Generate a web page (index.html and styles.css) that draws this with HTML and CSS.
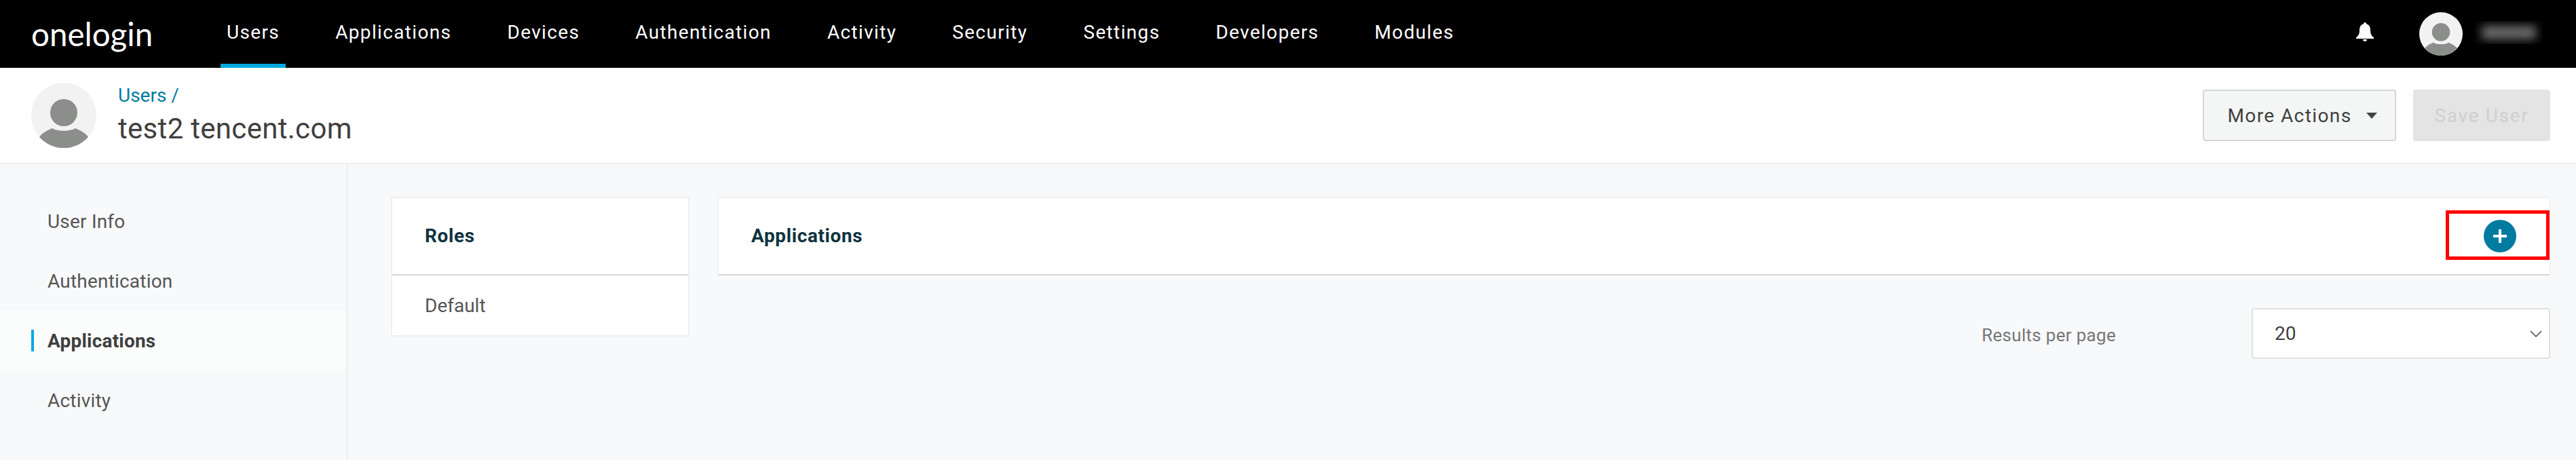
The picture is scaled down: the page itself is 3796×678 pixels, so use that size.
FILE: index.html
```html
<!DOCTYPE html>
<html lang="en">
<head>
<meta charset="utf-8">
<title>OneLogin - test2 tencent.com</title>
<link rel="stylesheet" href="styles.css">
</head>
<body>
<header class="topbar">
  <div class="logo">onelogin</div>
  <nav class="nav">
    <a class="nav-item active">Users</a>
    <a class="nav-item">Applications</a>
    <a class="nav-item">Devices</a>
    <a class="nav-item">Authentication</a>
    <a class="nav-item">Activity</a>
    <a class="nav-item">Security</a>
    <a class="nav-item">Settings</a>
    <a class="nav-item">Developers</a>
    <a class="nav-item">Modules</a>
  </nav>
  <div class="top-right">
    <svg class="bell" viewBox="0 0 26 28"><path d="M13 0c1.300 0 2 .9 2 2.200C19.500 3.300 21 7 21 11.500c0 5 1.500 8 5 11V24H0v-1.500c3.500-3 5-6 5-11C5 7 6.500 3.300 11 2.200 11 .9 11.700 0 13 0z" fill="#fff"/><path d="M10 25h6a3 3 0 0 1-6 0z" fill="#fff"/></svg>
    <svg class="avatar-small" viewBox="0 0 96 96"><circle cx="48" cy="48" r="48" fill="#f2f2f2"/><circle cx="48" cy="44" r="20" fill="#8c8e8c"/><path d="M12 80C16 74 24 70 31 67 38 72 58 72 65 67 72 70 80 74 84 80A48 48 0 0 1 12 80Z" fill="#8c8e8c"/></svg>
    <div class="blurred-name"><span class="blur-blob"></span></div>
  </div>
</header>

<section class="user-head">
  <svg class="avatar" viewBox="0 0 96 96"><circle cx="48" cy="48" r="48" fill="#f2f2f2"/><circle cx="48" cy="44" r="20" fill="#8c8e8c"/><path d="M12 80C16 74 24 70 31 67 38 72 58 72 65 67 72 70 80 74 84 80A48 48 0 0 1 12 80Z" fill="#8c8e8c"/></svg>
  <div class="user-title">
    <a class="crumb">Users /</a>
    <h1 class="user-name">test2 tencent.com</h1>
  </div>
  <div class="actions">
    <button class="btn btn-more">More Actions<span class="caret"></span></button>
    <button class="btn btn-save">Save User</button>
  </div>
</section>

<div class="body-row">
  <aside class="sidebar">
    <a class="side-item">User Info</a>
    <a class="side-item">Authentication</a>
    <a class="side-item active">Applications</a>
    <a class="side-item">Activity</a>
  </aside>
  <main class="main">
    <section class="card roles">
      <div class="card-head"><h2 class="card-title">Roles</h2></div>
      <div class="role-row">Default</div>
    </section>
    <div class="apps">
      <section class="card apps-card">
        <div class="card-head apps-head">
          <h2 class="card-title">Applications</h2>
          <button class="add-btn" aria-label="Add"><span class="plus"></span></button>
          <span class="highlight"></span>
        </div>
      </section>
      <div class="pager">
        <span class="pager-label">Results per page</span>
        <div class="select">20
          <svg class="chev" viewBox="0 0 18 10"><path d="M1 1l8 8 8-8" fill="none" stroke="#444" stroke-width="1.500"/></svg>
        </div>
      </div>
    </div>
  </main>
</div>
</body>
</html>
```

FILE: styles.css
```css
* { box-sizing: border-box; }
html, body { margin: 0; height: 100%; }
body {
  font-family: Roboto, "Liberation Sans", sans-serif;
  background: #f8f9fb;
  display: flex;
  flex-direction: column;
  overflow: hidden;
}

/* top bar */
.topbar {
  height: 100px;
  flex: none;
  background: #000;
  display: flex;
  align-items: center;
  padding: 0 49px 0 46px;
}
.logo {
  width: 270px;
  font-family: Lato, sans-serif;
  font-size: 47.5px;
  line-height: 100px;
  height: 100px;
  color: #fff;
  padding-bottom: 6px;
}
.nav { display: flex; gap: 64px; margin-left: 9px; }
.nav-item {
  height: 100px;
  padding: 0 9px;
  display: flex;
  align-items: center;
  border-bottom: 6px solid transparent;
  color: #fff;
  font-size: 28px;
  letter-spacing: 1.35px;
}
.nav-item.active { border-bottom-color: #00a9e0; }
.top-right { margin-left: auto; display: flex; align-items: center; }
.bell { width: 26px; height: 28px; margin-right: 67px; margin-top: -6px; }
.avatar-small { width: 64px; height: 64px; margin-right: 17px; }
.blurred-name {
  width: 101px;
  height: 34px;
  margin-top: -4px;
  overflow: hidden;
  display: flex;
  align-items: center;
  justify-content: center;
}
.blur-blob {
  width: 80px;
  height: 20px;
  background: #6a6a6a;
  filter: blur(7px);
}

/* user header */
.user-head {
  height: 142px;
  flex: none;
  background: #fff;
  border-bottom: 2px solid #eceef0;
  display: flex;
  align-items: center;
  padding: 0 38px 0 46px;
}
.avatar { width: 96px; height: 96px; margin-right: 32px; }
.user-title { display: flex; flex-direction: column; padding-bottom: 2px; }
.crumb { font-size: 28px; line-height: 32px; color: #007ba0; }
.user-name {
  margin: 10px 0 0;
  font-size: 42px;
  line-height: 46px;
  font-weight: 400;
  color: #3f3f3f;
  letter-spacing: .3px;
}
.actions { margin-left: auto; display: flex; gap: 25px; }
.btn {
  height: 76px;
  font-family: inherit;
  font-size: 28px;
  letter-spacing: 1.4px;
  border-radius: 4px;
  display: flex;
  align-items: center;
  justify-content: center;
}
.btn-more {
  width: 285px;
  padding: 0 0 0 8px;
  background: #f4f6f6;
  border: 2px solid #d5d7d7;
  color: #3f3f3f;
}
.caret {
  width: 0;
  height: 0;
  margin-left: 21px;
  border-left: 8px solid transparent;
  border-right: 8px solid transparent;
  border-top: 9px solid #444;
}
.btn-save {
  width: 202px;
  padding: 0;
  background: #e4e4e4;
  border: 0;
  color: #cfcfcf;
  letter-spacing: 1.7px;
}

/* body */
.body-row { flex: 1; display: flex; min-height: 0; }
.sidebar {
  width: 513px;
  flex: none;
  border-right: 3px solid #f0f1f3;
  padding-top: 40px;
}
.side-item {
  height: 88px;
  display: flex;
  align-items: center;
  padding-left: 70px;
  font-size: 28px;
  letter-spacing: .2px;
  color: #555;
  position: relative;
}
.side-item.active { background: #fbfcfc; color: #3f3f3f; font-weight: 700; }
.side-item.active::before {
  content: "";
  position: absolute;
  left: 46px;
  top: 28px;
  width: 4px;
  height: 32px;
  background: #00a9e0;
}
.main {
  flex: 1;
  display: flex;
  gap: 41px;
  align-items: flex-start;
  padding: 48px 38px 0 63px;
}
.card { background: #fff; border: 2px solid #eff0f2; }
.roles { width: 440px; flex: none; }
.card-head {
  height: 114px;
  border-bottom: 2px solid #d5d5d5;
  display: flex;
  align-items: center;
  padding-left: 48px;
  margin-bottom: 0;
}
.card-title {
  margin: 0;
  font-size: 28px;
  line-height: 32px;
  font-weight: 700;
  letter-spacing: .6px;
  color: #0f3340;
}
.role-row {
  height: 88px;
  padding-left: 48px;
  display: flex;
  align-items: center;
  font-size: 28px;
  color: #555;
}
.apps { flex: 1; min-width: 0; }
.apps-card { border-bottom: 0; border-right-width: 1px; }
.apps-head { position: relative; justify-content: space-between; padding-right: 49px; }
.add-btn {
  width: 48px;
  height: 48px;
  border: 0;
  padding: 0;
  border-radius: 50%;
  background: #007ba0;
  display: flex;
  align-items: center;
  justify-content: center;
  margin-top: 0;
}
.plus {
  width: 20px;
  height: 20px;
  background:
    linear-gradient(#fff, #fff) center / 20px 4px no-repeat,
    linear-gradient(#fff, #fff) center / 4px 20px no-repeat;
}
.highlight {
  position: absolute;
  right: 0;
  top: 18px;
  width: 153px;
  height: 73px;
  border: 5px solid #f00;
}
.pager {
  margin-top: 48px;
  display: flex;
  justify-content: flex-end;
  gap: 200px;
}
.pager-label {
  font-size: 26px;
  line-height: 32px;
  letter-spacing: .3px;
  color: #777;
  padding-top: 24px;
}
.select {
  width: 440px;
  height: 75px;
  background: #fff;
  border: 2px solid #dfe1e3;
  border-radius: 4px;
  padding: 0 10px 0 32px;
  display: flex;
  align-items: center;
  justify-content: space-between;
  font-size: 28px;
  color: #3f3f3f;
}
.chev { width: 18px; height: 10px; }
```
